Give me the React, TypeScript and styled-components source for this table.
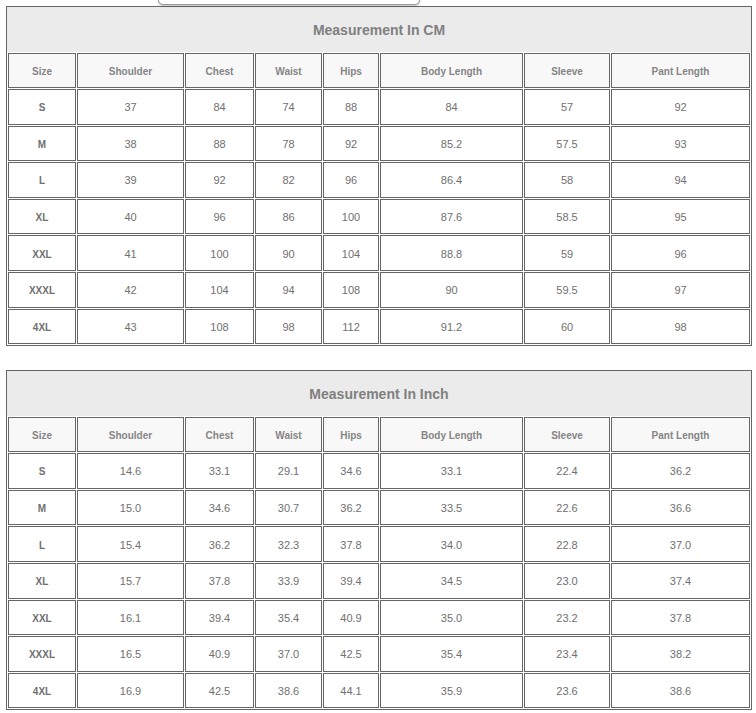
import styled, { createGlobalStyle } from 'styled-components';
import { Fragment } from 'react';

const columns = ['Size', 'Shoulder', 'Chest', 'Waist', 'Hips', 'Body Length', 'Sleeve', 'Pant Length'];
const widths = [68, 107, 69, 67, 56, 143, 86, 139];
const sizes = ['S', 'M', 'L', 'XL', 'XXL', 'XXXL', '4XL'];

const cmRows = [
    ['37', '84', '74', '88', '84', '57', '92'],
    ['38', '88', '78', '92', '85.2', '57.5', '93'],
    ['39', '92', '82', '96', '86.4', '58', '94'],
    ['40', '96', '86', '100', '87.6', '58.5', '95'],
    ['41', '100', '90', '104', '88.8', '59', '96'],
    ['42', '104', '94', '108', '90', '59.5', '97'],
    ['43', '108', '98', '112', '91.2', '60', '98'],
];

const inchRows = [
    ['14.6', '33.1', '29.1', '34.6', '33.1', '22.4', '36.2'],
    ['15.0', '34.6', '30.7', '36.2', '33.5', '22.6', '36.6'],
    ['15.4', '36.2', '32.3', '37.8', '34.0', '22.8', '37.0'],
    ['15.7', '37.8', '33.9', '39.4', '34.5', '23.0', '37.4'],
    ['16.1', '39.4', '35.4', '40.9', '35.0', '23.2', '37.8'],
    ['16.5', '40.9', '37.0', '42.5', '35.4', '23.4', '38.2'],
    ['16.9', '42.5', '38.6', '44.1', '35.9', '23.6', '38.6'],
];

const SizeChart = ({ title, rows }: { title: string; rows: string[][] }) => (
    <ChartBox>
        <Title>{title}</Title>
        <Grid>
            <colgroup>
                {widths.map((w, i) => <Col key={i} $w={w} />)}
            </colgroup>
            <thead>
                <tr>
                    {columns.map(c => <HeadCell key={c}>{c}</HeadCell>)}
                </tr>
            </thead>
            <tbody>
                {rows.map((row, i) => (
                    <tr key={sizes[i]}>
                        <SizeCell>{sizes[i]}</SizeCell>
                        {row.map((v, j) => <ValueCell key={j}>{v}</ValueCell>)}
                    </tr>
                ))}
            </tbody>
        </Grid>
    </ChartBox>
);

const App = () => {
    return (
    <Fragment>
        <GlobalStyle />
        <Page>
            <Popup />
            <SizeChart title="Measurement In CM" rows={cmRows} />
            <SizeChart title="Measurement In Inch" rows={inchRows} />
        </Page>
    </Fragment>
    );
};

const GlobalStyle = createGlobalStyle`
    * {
        box-sizing: border-box;
    }

    body {
        margin: 0;
        background-color: #ffffff;
        font-family: "Liberation Sans", Arial, sans-serif;
    }
`;

const Page = styled.div`
    position: relative;
    padding: 6px 0 0 6px;
    display: flex;
    flex-direction: column;
    gap: 24px;
`;

// bottom edge of a floating box that hangs over the page top
const Popup = styled.div`
    position: absolute;
    top: -31px;
    left: 158px;
    width: 262px;
    height: 36px;
    background: #ffffff;
    border: 1px solid #9a9a9a;
    border-radius: 5px;
    box-shadow: 0 1px 2px rgba(0, 0, 0, 0.25);
`;

const ChartBox = styled.div`
    width: 746px;
    border: 1px solid #666666;
    background: #ffffff;
`;

const Title = styled.div`
    height: 45px;
    background: #ebebeb;
    display: flex;
    align-items: center;
    justify-content: center;
    font-size: 14px;
    font-weight: bold;
    color: #808080;
`;

const Grid = styled.table`
    width: 744px;
    table-layout: fixed;
    border-collapse: separate;
    border-spacing: 1px;
`;

const Col = styled.col<{ $w: number }>`
    width: ${p => p.$w}px;
`;

const HeadCell = styled.th`
    height: 35px;
    padding: 1px 0 0;
    border: 1px solid #666666;
    background: #f8f8f8;
    font-size: 10px;
    font-weight: bold;
    color: #858585;
    text-align: center;
    vertical-align: middle;
`;

const SizeCell = styled.td`
    height: 35.6px;
    padding: 2px 0 0;
    border: 1px solid #666666;
    font-size: 10px;
    font-weight: bold;
    color: #707070;
    text-align: center;
    vertical-align: middle;
`;

const ValueCell = styled.td`
    height: 35.6px;
    padding: 1px 0 0;
    border: 1px solid #666666;
    font-size: 11px;
    color: #707070;
    text-align: center;
    vertical-align: middle;
`;

export default App;
